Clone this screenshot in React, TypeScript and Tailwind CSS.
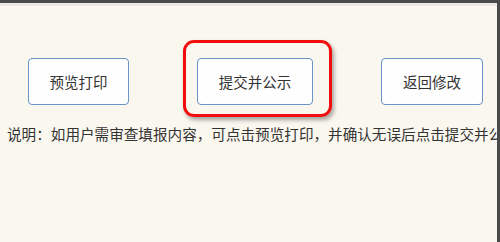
export default function App() {
  const font = { fontFamily: '"Microsoft YaHei", "Noto Sans CJK SC", "Noto Sans", sans-serif' };
  return (
    <div className="w-[500px] h-[242px] overflow-hidden flex flex-col bg-[#4a4a4a]" style={font}>
      <div className="h-[3px] shrink-0 bg-[#4a4a4a]" />
      <div className="flex flex-1 min-h-0">
        <div className="flex-1 flex flex-col bg-[#faf7ef] overflow-hidden">
          <div className="h-[3px] shrink-0 bg-[#ebe8e6]" />
          <div className="flex pl-[28px] pt-[52px] gap-[68px]">
            <button className="w-[101px] h-[47px] rounded-[4px] border border-[#6a93c8] bg-[#fefefe] text-[14.5px] text-[#333]">
              预览打印
            </button>
            <div className="relative">
              <div className="absolute left-[-14px] top-[-18px] w-[149px] h-[77px] rounded-[11px] border-[3px] border-[#f20d0d] shadow-[2px_3px_4px_rgba(0,0,0,0.35)]" />
              <button className="relative w-[116px] h-[47px] rounded-[4px] border border-[#6a93c8] bg-[#fefefe] text-[14.5px] text-[#333]">
                提交并公示
              </button>
            </div>
            <button className="w-[102px] h-[47px] rounded-[4px] border border-[#6a93c8] bg-[#fefefe] text-[14.5px] text-[#333]">
              返回修改
            </button>
          </div>
          <p className="mt-[18px] pl-[7px] whitespace-nowrap text-[14.6px] leading-[22px] text-[#333]">
            说明：如用户需审查填报内容，可点击预览打印，并确认无误后点击提交并公示。
          </p>
        </div>
        <div className="w-[3px] shrink-0 bg-[#4a4a4a]" />
      </div>
    </div>
  );
}
